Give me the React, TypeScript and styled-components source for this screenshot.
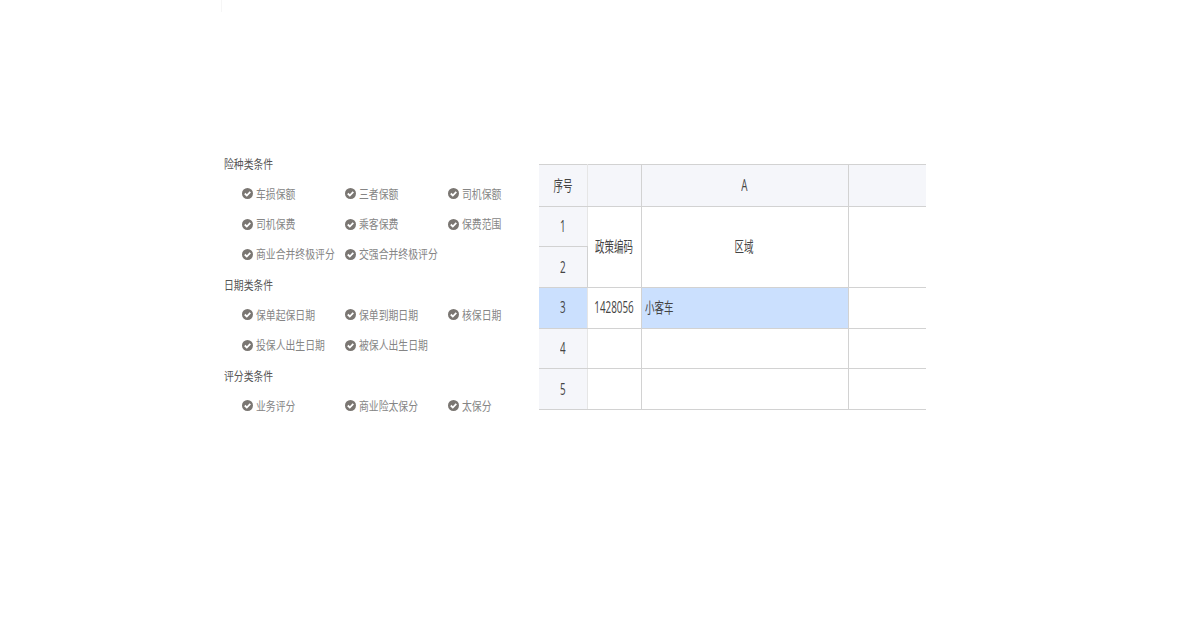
import styled, { createGlobalStyle } from 'styled-components';

const GlobalStyle = createGlobalStyle`
  html, body {
    margin: 0;
    padding: 0;
    background: #fff;
    font-family: "Open Sans", "Noto Sans CJK SC", sans-serif;
  }
`;

const Page = styled.div`
  position: relative;
  display: flex;
  align-items: flex-start;
  width: 1202px;
  height: 619px;
  padding: 149px 0 0 224px;
  box-sizing: border-box;
  overflow: hidden;
`;

const TopMark = styled.div`
  position: absolute;
  top: 0;
  left: 221px;
  width: 1px;
  height: 12px;
  background: #f6f6f6;
`;

const Conditions = styled.div`
  width: 315px;
  flex-shrink: 0;
`;

const GroupTitle = styled.div`
  height: 30.25px;
  box-sizing: border-box;
  padding-top: 1px;
  line-height: 30.25px;
  font-size: 12px;
  color: #555;
  white-space: nowrap;
`;

const ItemGrid = styled.div`
  display: grid;
  grid-template-columns: repeat(3, 103px);
  grid-auto-rows: 30.25px;
  padding-left: 18px;
`;

const Item = styled.div`
  display: flex;
  align-items: center;
  gap: 3px;
  padding-bottom: 1px;
  box-sizing: border-box;
  white-space: nowrap;
`;

const ItemLabel = styled.span`
  font-size: 12px;
  color: #858585;
  display: inline-block;
  transform: scaleX(0.82);
  transform-origin: left center;
`;

const GroupLabel = styled.span`
  display: inline-block;
  transform: scaleX(0.82);
  transform-origin: left center;
`;

const TableClip = styled.div`
  width: 387px;
  margin-top: 15px;
  overflow: hidden;
  flex-shrink: 0;
`;

const Sheet = styled.table`
  border-collapse: collapse;
  table-layout: fixed;
  width: 440px;
  font-size: 15px;
  color: #444;
`;

const Row = styled.tr<{ $first?: boolean }>`
  height: ${(p) => (p.$first ? '41.5px' : '40.7px')};
`;

const Cell = styled.td<{ $head?: boolean; $active?: boolean; $left?: boolean }>`
  padding: 0 0 2px ${(p) => (p.$left ? '3px' : '0')};
  box-sizing: border-box;
  border: 1px solid #d2d2d2;
  background: ${(p) => (p.$active ? '#cbe0fe' : p.$head ? '#f5f6fa' : '#fff')};
  text-align: ${(p) => (p.$left ? 'left' : 'center')};
  &:first-child {
    border-left: 0;
    border-right-color: #e6e6e6;
  }
`;

/* squeezed text is wider than its cell before the transform, the negative margin keeps it centred */
const CellText = styled.span<{ $left?: boolean; $big?: boolean }>`
  display: inline-block;
  white-space: nowrap;
  margin: 0 ${(p) => (p.$left ? '0' : '-30px')};
  font-size: ${(p) => (p.$big ? '17px' : '15px')};
  transform: scaleX(${(p) => (p.$big ? 0.58 : 0.63)});
  transform-origin: ${(p) => (p.$left ? 'left' : 'center')} center;
`;

const CheckIcon = () => (
  <svg width="11" height="11" viewBox="0 0 11 11" style={{ flexShrink: 0 }}>
    <circle cx="5.5" cy="5.5" r="5.5" fill="#7a7672" />
    <path d="M2.8 5.5 4.8 7.5 8.3 3.8" fill="none" stroke="#fff" strokeWidth="1.8" />
  </svg>
);

const groups = [
  {
    title: '险种类条件',
    items: ['车损保额', '三者保额', '司机保额', '司机保费', '乘客保费', '保费范围', '商业合并终极评分', '交强合并终极评分'],
  },
  {
    title: '日期类条件',
    items: ['保单起保日期', '保单到期日期', '核保日期', '投保人出生日期', '被保人出生日期'],
  },
  {
    title: '评分类条件',
    items: ['业务评分', '商业险太保分', '太保分'],
  },
];

const App = () => {
  return (
    <Page>
      <GlobalStyle />
      <TopMark />
      <Conditions>
        {groups.map((group) => (
          <div key={group.title}>
            <GroupTitle>
              <GroupLabel>{group.title}</GroupLabel>
            </GroupTitle>
            <ItemGrid>
              {group.items.map((item) => (
                <Item key={item}>
                  <CheckIcon />
                  <ItemLabel>{item}</ItemLabel>
                </Item>
              ))}
            </ItemGrid>
          </div>
        ))}
      </Conditions>
      <TableClip>
        <Sheet>
          <colgroup>
            <col width="48" />
            <col width="54" />
            <col width="207" />
            <col />
          </colgroup>
          <tbody>
            <Row $first>
              <Cell $head><CellText>序号</CellText></Cell>
              <Cell $head />
              <Cell $head><CellText $big>A</CellText></Cell>
              <Cell $head />
            </Row>
            <Row>
              <Cell $head><CellText $big>1</CellText></Cell>
              <Cell rowSpan={2}><CellText>政策编码</CellText></Cell>
              <Cell rowSpan={2}><CellText>区域</CellText></Cell>
              <Cell rowSpan={2} />
            </Row>
            <Row>
              <Cell $head><CellText $big>2</CellText></Cell>
            </Row>
            <Row>
              <Cell $active><CellText $big>3</CellText></Cell>
              <Cell><CellText $big>1428056</CellText></Cell>
              <Cell $active $left><CellText $left>小客车</CellText></Cell>
              <Cell />
            </Row>
            <Row>
              <Cell $head><CellText $big>4</CellText></Cell>
              <Cell />
              <Cell />
              <Cell />
            </Row>
            <Row>
              <Cell $head><CellText $big>5</CellText></Cell>
              <Cell />
              <Cell />
              <Cell />
            </Row>
          </tbody>
        </Sheet>
      </TableClip>
    </Page>
  );
};

export default App;
